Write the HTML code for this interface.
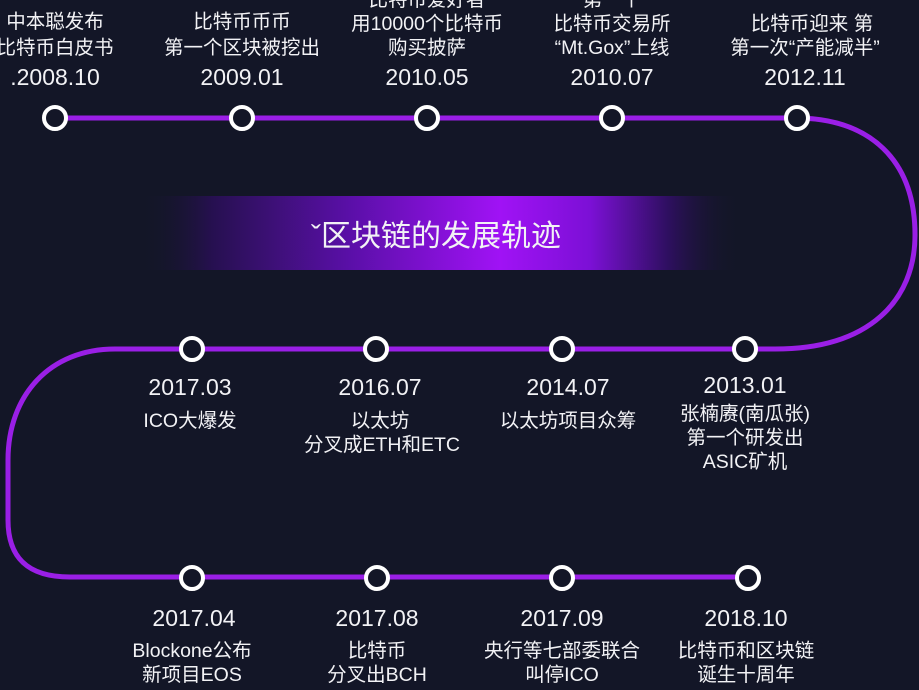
<!DOCTYPE html>
<html><head><meta charset="utf-8"><style>
html,body{margin:0;padding:0;background:#131627;overflow:hidden}
svg{display:block}
text{font-family:"Liberation Sans","Noto Sans CJK SC",sans-serif;fill:#f2f2f5;text-anchor:middle}
.d{font-size:23px}
.t{font-size:19.5px}
</style></head><body>
<svg width="919" height="690" viewBox="0 0 919 690" xmlns="http://www.w3.org/2000/svg">
<defs>
<linearGradient id="g" x1="0" x2="1">
<stop offset="0" stop-color="#131627" stop-opacity="0"/>
<stop offset="0.12" stop-color="#261050"/>
<stop offset="0.35" stop-color="#5a0fa8"/>
<stop offset="0.6" stop-color="#a012f5"/>
<stop offset="0.75" stop-color="#7c10d6"/>
<stop offset="0.88" stop-color="#2e0f60"/>
<stop offset="1" stop-color="#131627" stop-opacity="0"/>
</linearGradient>
</defs>
<rect width="919" height="690" fill="#131627"/>
<rect x="140" y="196" width="600" height="74" fill="url(#g)"/>
<text x="436" y="246" style="font-size:30px">ˇ区块链的发展轨迹</text>
<g fill="none" stroke="#9a1fe6" stroke-width="5">
<path d="M55 118 H795 C870 118 915 160 915 235 C915 300 870 349 775 349 H115 C50 349 8 395 8 460 V520 C8 555 25 577 70 577 H748"/>
</g>
<g fill="#131627" stroke="#fff" stroke-width="4">
<circle cx="55" cy="118" r="11"/><circle cx="242" cy="118" r="11"/><circle cx="427" cy="118" r="11"/><circle cx="612" cy="118" r="11"/><circle cx="797" cy="118" r="11"/>
<circle cx="192" cy="349" r="11"/><circle cx="376" cy="349" r="11"/><circle cx="562" cy="349" r="11"/><circle cx="745" cy="349" r="11"/>
<circle cx="192" cy="578" r="11"/><circle cx="377" cy="578" r="11"/><circle cx="562" cy="578" r="11"/><circle cx="748" cy="578" r="11"/>
</g>
<text class="t" x="55" y="28">中本聪发布</text><text class="t" x="55" y="54">比特币白皮书</text><text class="d" x="55" y="85">.2008.10</text>
<text class="t" x="242" y="28">比特币币币</text><text class="t" x="242" y="54">第一个区块被挖出</text><text class="d" x="242" y="85">2009.01</text>
<text class="t" x="427" y="6">比特币爱好者</text><text class="t" x="427" y="30">用10000个比特币</text><text class="t" x="427" y="54">购买披萨</text><text class="d" x="427" y="85">2010.05</text>
<text class="t" x="612" y="6">第一个</text><text class="t" x="612" y="30">比特币交易所</text><text class="t" x="612" y="54">“Mt.Gox”上线</text><text class="d" x="612" y="85">2010.07</text>
<text class="t" x="812" y="30">比特币迎来 第</text><text class="t" x="805" y="54">第一次“产能减半”</text><text class="d" x="805" y="85">2012.11</text>
<text class="d" x="190" y="395">2017.03</text><text class="t" x="190" y="427">ICO大爆发</text>
<text class="d" x="380" y="395">2016.07</text><text class="t" x="380" y="427">以太坊</text><text class="t" x="382" y="451">分叉成ETH和ETC</text>
<text class="d" x="568" y="395">2014.07</text><text class="t" x="568" y="427">以太坊项目众筹</text>
<text class="d" x="745" y="393">2013.01</text><text class="t" x="745" y="420">张楠赓(南瓜张)</text><text class="t" x="745" y="444">第一个研发出</text><text class="t" x="745" y="468">ASIC矿机</text>
<text class="d" x="194" y="626">2017.04</text><text class="t" x="192" y="657">Blockone公布</text><text class="t" x="192" y="681">新项目EOS</text>
<text class="d" x="377" y="626">2017.08</text><text class="t" x="377" y="657">比特币</text><text class="t" x="377" y="681">分叉出BCH</text>
<text class="d" x="562" y="626">2017.09</text><text class="t" x="562" y="657">央行等七部委联合</text><text class="t" x="562" y="681">叫停ICO</text>
<text class="d" x="746" y="626">2018.10</text><text class="t" x="746" y="657">比特币和区块链</text><text class="t" x="746" y="681">诞生十周年</text>
</svg>
</body></html>
